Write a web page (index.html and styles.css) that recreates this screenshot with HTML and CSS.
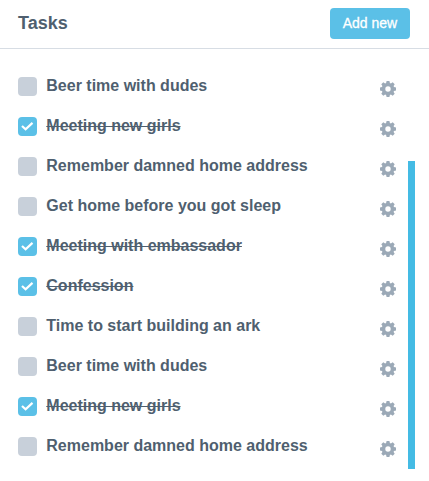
FILE: index.html
```html
<!DOCTYPE html>
<html lang="en">
<head>
<meta charset="utf-8">
<title>Tasks</title>
<link rel="stylesheet" href="styles.css">
</head>
<body>
<svg class="symbols" aria-hidden="true">
  <symbol id="gear" viewBox="-8 -8 16 16"><path fill-rule="evenodd" d="M-1.400-8H1.400L1.900-6 2.900-5.600 4.700-6.700 6.700-4.700 5.600-2.900 6-1.900 8-1.400V1.400L6 1.900 5.600 2.900 6.700 4.700 4.700 6.700 2.900 5.600 1.900 6 1.400 8H-1.400L-1.900 6-2.900 5.600-4.700 6.700-6.700 4.700-5.600 2.900-6 1.900-8 1.400V-1.400L-6-1.900-5.600-2.900-6.700-4.700-4.700-6.700-2.900-5.600-1.900-6ZM0-2.700A2.700 2.700 0 1 0 0 2.700 2.700 2.700 0 1 0 0-2.700Z"/></symbol>
  <symbol id="check" viewBox="0 0 19 19"><path d="M4 9 7.600 12.300 14.500 5.900"/></symbol>
</svg>
<header class="header">
  <h1 class="title">Tasks</h1>
  <button class="add">Add new</button>
</header>
<main class="panel">
  <ul class="tasks">
    <li class="task"><span class="box"></span><span class="label">Beer time with dudes</span><svg class="gear"><use href="#gear"/></svg></li>
    <li class="task done"><span class="box"><svg class="check"><use href="#check"/></svg></span><span class="label">Meeting new girls</span><svg class="gear"><use href="#gear"/></svg></li>
    <li class="task"><span class="box"></span><span class="label">Remember damned home address</span><svg class="gear"><use href="#gear"/></svg></li>
    <li class="task"><span class="box"></span><span class="label">Get home before you got sleep</span><svg class="gear"><use href="#gear"/></svg></li>
    <li class="task done"><span class="box"><svg class="check"><use href="#check"/></svg></span><span class="label">Meeting with embassador</span><svg class="gear"><use href="#gear"/></svg></li>
    <li class="task done"><span class="box"><svg class="check"><use href="#check"/></svg></span><span class="label">Confession</span><svg class="gear"><use href="#gear"/></svg></li>
    <li class="task"><span class="box"></span><span class="label">Time to start building an ark</span><svg class="gear"><use href="#gear"/></svg></li>
    <li class="task"><span class="box"></span><span class="label">Beer time with dudes</span><svg class="gear"><use href="#gear"/></svg></li>
    <li class="task done"><span class="box"><svg class="check"><use href="#check"/></svg></span><span class="label">Meeting new girls</span><svg class="gear"><use href="#gear"/></svg></li>
    <li class="task"><span class="box"></span><span class="label">Remember damned home address</span><svg class="gear"><use href="#gear"/></svg></li>
  </ul>
  <div class="scrollbar"></div>
</main>
</body>
</html>
```
FILE: styles.css
```css
* { box-sizing: border-box; }
body {
  margin: 0;
  height: 481px;
  overflow: hidden;
  background: #fff;
  color: #4f5f6f;
  font-family: "Liberation Sans", Arial, sans-serif;
}
.symbols { display: none; }
.header {
  display: flex;
  align-items: flex-start;
  justify-content: space-between;
  height: 49px;
  padding: 8px 19px 0 18px;
  border-bottom: 1px solid #d7dde4;
}
.title {
  margin: 4px 0 0;
  font-size: 18px;
  line-height: 22px;
}
.add {
  width: 80px;
  height: 31px;
  padding: 0 0 1px;
  border: 0;
  border-radius: 4px;
  background: #5bc0e7;
  color: #fff;
  font: 14px "Liberation Sans", Arial, sans-serif;
  -webkit-text-stroke: 0.3px #fff;
}
.panel {
  display: flex;
  justify-content: space-between;
  height: 420px;
  padding: 28px 14px 0 18px;
}
.tasks {
  width: 378px;
  margin: 0;
  padding: 0;
  list-style: none;
}
.task {
  display: flex;
  align-items: flex-start;
  height: 40px;
}
.box {
  flex: none;
  width: 19px;
  height: 19px;
  border-radius: 4px;
  background: #c8d0da;
}
.done .box { background: #5bc0e7; }
.check {
  display: block;
  width: 19px;
  height: 19px;
  fill: none;
  stroke: #fff;
  stroke-width: 2.2;
}
.label {
  flex: 1;
  margin-left: 9.300px;
  font-size: 16px;
  font-weight: 700;
  line-height: 18px;
  white-space: nowrap;
}
.done .label { text-decoration: line-through; }
.gear {
  flex: none;
  width: 16px;
  height: 16px;
  margin-top: 4px;
  fill: #9ba9b7;
}
.scrollbar {
  align-self: flex-end;
  width: 7px;
  height: 308px;
  background: #44bbe4;
}
```
